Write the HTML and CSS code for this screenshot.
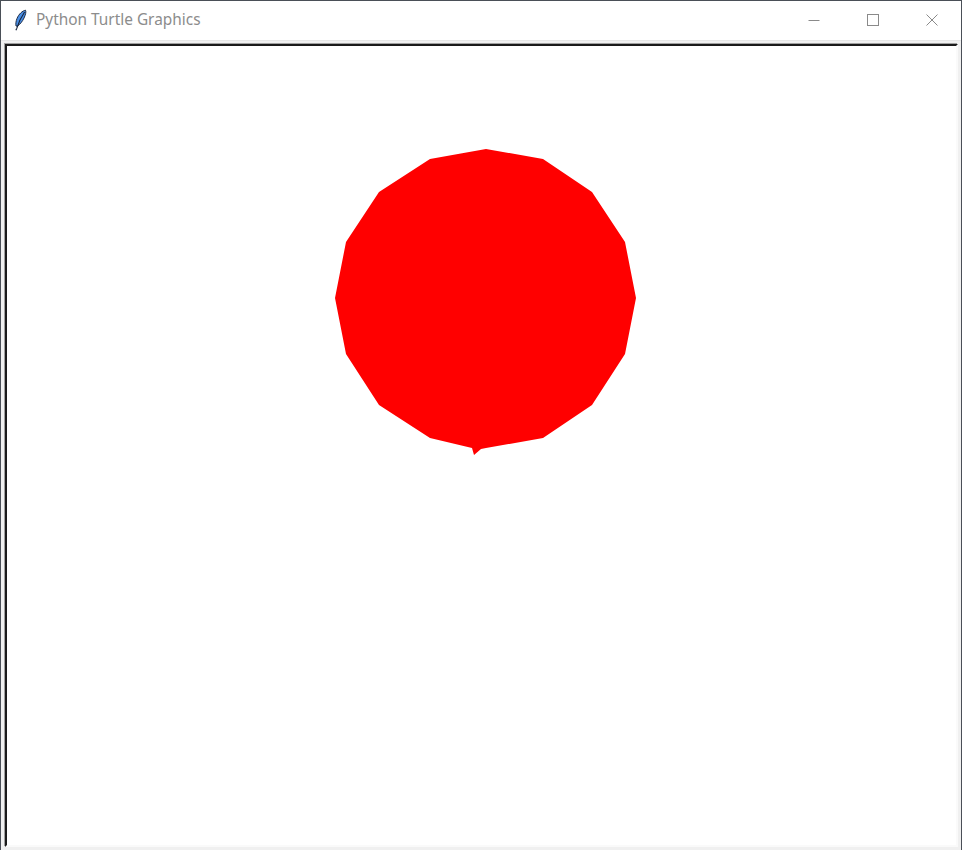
FILE: index.html
```html
<!DOCTYPE html>
<html>
<head>
<meta charset="utf-8">
<title>Python Turtle Graphics</title>
<link rel="stylesheet" href="styles.css">
</head>
<body>
<div class="window">
  <div class="titlebar">
    <svg class="app-icon" width="16" height="22" viewBox="0 0 16 22">
      <path d="M13.5 1.2 C10.5 1.8 6.8 5 5 9.5 C4 12 3.6 14.6 4 17 L5.3 17.2 C7.8 15.6 10.4 12.5 12 9 C13.6 5.6 14.3 3 13.5 1.2 Z" fill="#4a8fe6" stroke="#1d2b45" stroke-width="1"/>
      <path d="M12.6 3 C9.5 7.5 7 12 4.6 19.8" fill="none" stroke="#16233a" stroke-width="1.1"/>
      <path d="M4.6 19.8 L3.9 21.2" stroke="#16233a" stroke-width="1.2"/>
    </svg>
    <span class="title">Python Turtle Graphics</span>
    <div class="controls">
      <div class="ctrl">
        <svg width="12" height="12" viewBox="0 0 12 12"><path d="M0.5 6.5 H11.5" stroke="#8a8a8a" stroke-width="1"/></svg>
      </div>
      <div class="ctrl ctrl-wide">
        <svg width="12" height="12" viewBox="0 0 12 12"><rect x="0.5" y="0.5" width="11" height="11" fill="none" stroke="#8a8a8a" stroke-width="1"/></svg>
      </div>
      <div class="ctrl">
        <svg width="12" height="12" viewBox="0 0 12 12"><path d="M0.5 0.5 L11.5 11.5 M11.5 0.5 L0.5 11.5" stroke="#8a8a8a" stroke-width="1"/></svg>
      </div>
    </div>
  </div>
  <div class="client">
    <div class="canvas-frame">
      <svg class="drawing" viewBox="7 45 949 799" preserveAspectRatio="none">
        <polygon fill="#ff0000" points="486,148 543,158 592,191 625,241 636,297 625,353 592,404 543,437 486,447 481,448 474,454 472,447 430,437 379,404 346,353 335,297 346,241 379,191 430,158"/>
      </svg>
    </div>
  </div>
</div>
</body>
</html>
```
FILE: styles.css
```css
html, body {
  margin: 0;
  padding: 0;
  background: #ffffff;
}
body {
  width: 962px;
  height: 850px;
  overflow: hidden;
}
.window {
  box-sizing: border-box;
  width: 962px;
  height: 850px;
  border: 1px solid #4a4f57;
  display: flex;
  flex-direction: column;
  background: #f0f0f0;
}
.titlebar {
  height: 39px;
  flex: none;
  background: #ffffff;
  display: flex;
  align-items: center;
}
.app-icon {
  margin-left: 11px;
  margin-top: -1px;
  flex: none;
}
.title {
  margin-left: 8px;
  font-family: "Noto Sans", "Noto Sans CJK SC", sans-serif;
  font-size: 15.4px;
  color: #8c8c8c;
  margin-top: -2px;
}
.controls {
  margin-left: auto;
  display: flex;
  height: 100%;
}
.ctrl {
  width: 58px;
  height: 100%;
  display: flex;
  align-items: center;
  justify-content: center;
}
.ctrl-wide {
  width: 60px;
}
.ctrl svg {
  margin-top: -1px;
}
.client {
  flex: 1;
  display: flex;
  padding: 3px 3px 3px 4px;
  border-top: 1px solid #e6e6e6;
  background: #f0f0f0;
}
.canvas-frame {
  flex: 1;
  display: flex;
  border-style: solid;
  border-width: 2px;
  border-color: #1a1a1a #fafafa #fafafa #1a1a1a;
  background: #ffffff;
  box-shadow: -1px -1px 0 #a0a0a0;
}
.drawing {
  flex: 1;
  width: 100%;
  height: 100%;
  display: block;
}
```
